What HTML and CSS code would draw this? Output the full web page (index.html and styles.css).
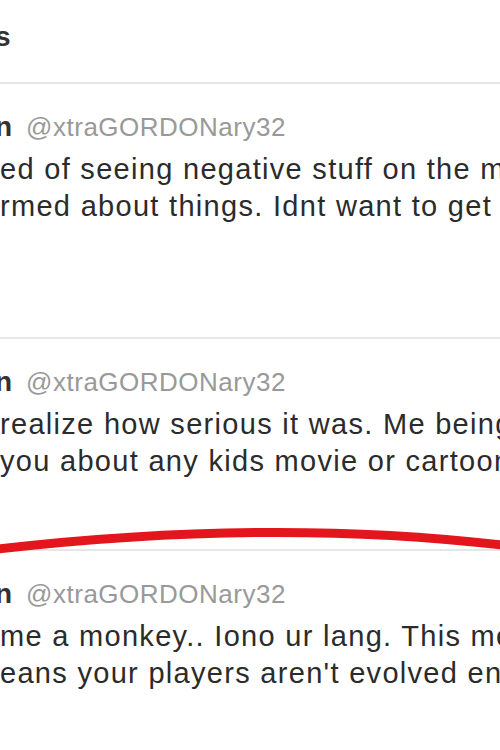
FILE: index.html
```html
<!DOCTYPE html>
<html lang="en">
<head>
  <meta charset="UTF-8">
  <title>Tweets</title>
  <link rel="stylesheet" href="styles.css">
</head>
<body>
  <div class="stream">
    <!-- header, cropped on the left -->
    <div class="stream-header">
      <h2 class="title">s</h2>
    </div>

    <div class="tweet tweet-tall">
      <div class="tweet-head">
        <span class="fullname">n</span><span class="username">@xtraGORDONary32</span>
      </div>
      <p class="tweet-text">
        <span class="line">ed of seeing negative stuff on the media</span>
        <span class="line">rmed about things. Idnt want to get</span>
      </p>
    </div>

    <div class="tweet">
      <div class="tweet-head">
        <span class="fullname">n</span><span class="username">@xtraGORDONary32</span>
      </div>
      <p class="tweet-text">
        <span class="line">realize how serious it was. Me being</span>
        <span class="line">you about any kids movie or cartoon</span>
      </p>
    </div>

    <div class="tweet">
      <div class="tweet-head">
        <span class="fullname">n</span><span class="username">@xtraGORDONary32</span>
      </div>
      <p class="tweet-text">
        <span class="line">me a monkey.. Iono ur lang. This means</span>
        <span class="line">eans your players aren't evolved enough</span>
      </p>
    </div>
  </div>

  <!-- red marker stroke drawn over the screenshot -->
  <svg class="marker" width="500" height="750" viewBox="0 0 500 750">
    <path d="M-10 550 Q270 517 510 546" fill="none" stroke="#e3161e" stroke-width="9"/>
  </svg>
</body>
</html>
```

FILE: styles.css
```css
body {
  margin: 0;
  background: #fff;
  font-family: "Liberation Sans", Arial, sans-serif;
  color: #2b2b2b;
  overflow: hidden;
}

.stream {
  width: 500px;
  overflow: hidden;
}

.stream-header {
  height: 61px;
  padding-top: 21px;
  border-bottom: 2px solid #e6e6e6;
}

.title {
  margin: 0 0 0 -5px;
  font-size: 28px;
  line-height: 32px;
  font-weight: bold;
  color: #333;
}

.tweet {
  padding: 28px 0 69px;
  border-bottom: 2px solid #e6e6e6;
}

.tweet-tall {
  padding-bottom: 112px;
}

.tweet-head {
  font-size: 26px;
  line-height: 30px;
  white-space: nowrap;
}

.fullname {
  display: inline-block;
  margin-left: -5px;
  margin-right: 14px;
  font-size: 28px;
  font-weight: bold;
  color: #333;
}

.username {
  color: #999;
  letter-spacing: 0.5px;
}

.tweet-text {
  margin: 9px 0 0;
  font-size: 29px;
  line-height: 37px;
  letter-spacing: 1.3px;
}

.tweet-text .line {
  display: block;
  white-space: nowrap;
}

.marker {
  position: absolute;
  top: 0;
  left: 0;
  pointer-events: none;
}
```
